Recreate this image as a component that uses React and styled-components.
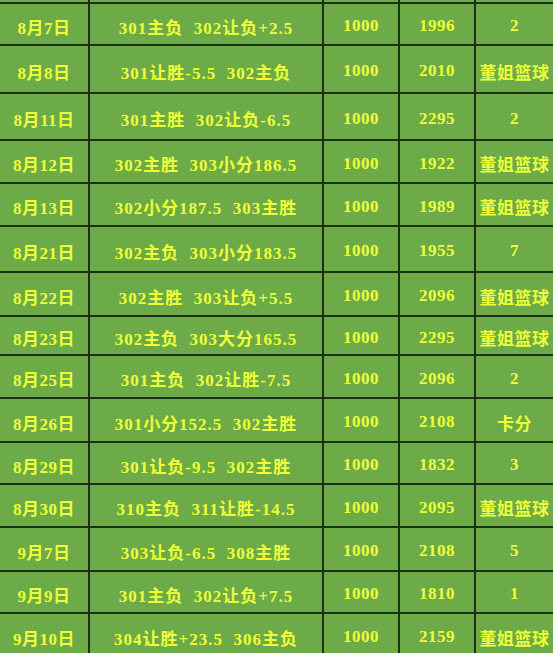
import styled, { createGlobalStyle } from 'styled-components';

const GlobalStyle = createGlobalStyle`
  html, body {
    margin: 0;
    padding: 0;
    background: #6cab48;
  }
  body {
    width: 553px;
    height: 653px;
    overflow: hidden;
  }
`;

const rows = [
  { date: '8月7日', match: '301主负  302让负+2.5', stake: '1000', total: '1996', note: '2', h: 42 },
  { date: '8月8日', match: '301让胜-5.5  302主负', stake: '1000', total: '2010', note: '董姐篮球', h: 48 },
  { date: '8月11日', match: '301主胜  302让负-6.5', stake: '1000', total: '2295', note: '2', h: 47 },
  { date: '8月12日', match: '302主胜  303小分186.5', stake: '1000', total: '1922', note: '董姐篮球', h: 43 },
  { date: '8月13日', match: '302小分187.5  303主胜', stake: '1000', total: '1989', note: '董姐篮球', h: 43 },
  { date: '8月21日', match: '302主负  303小分183.5', stake: '1000', total: '1955', note: '7', h: 46 },
  { date: '8月22日', match: '302主胜  303让负+5.5', stake: '1000', total: '2096', note: '董姐篮球', h: 44 },
  { date: '8月23日', match: '302主负  303大分165.5', stake: '1000', total: '2295', note: '董姐篮球', h: 39 },
  { date: '8月25日', match: '301主负  302让胜-7.5', stake: '1000', total: '2096', note: '2', h: 43 },
  { date: '8月26日', match: '301小分152.5  302主胜', stake: '1000', total: '2108', note: '卡分', h: 44 },
  { date: '8月29日', match: '301让负-9.5  302主胜', stake: '1000', total: '1832', note: '3', h: 42 },
  { date: '8月30日', match: '310主负  311让胜-14.5', stake: '1000', total: '2095', note: '董姐篮球', h: 43 },
  { date: '9月7日', match: '303让负-6.5  308主胜', stake: '1000', total: '2108', note: '5', h: 44 },
  { date: '9月9日', match: '301主负  302让负+7.5', stake: '1000', total: '1810', note: '1', h: 42 },
  { date: '9月10日', match: '304让胜+23.5  306主负', stake: '1000', total: '2159', note: '董姐篮球', h: 44 },
];

const Sheet = styled.div`
  display: flex;
  flex-direction: column;
  width: 553px;
  background: #6cab48;
  font-family: "Liberation Serif", "Noto Sans CJK SC", serif;
  font-weight: bold;
  font-size: 17px;
  color: #eeff3a;
`;

const Row = styled.div`
  display: grid;
  grid-template-columns: 88px 234px 76px 76px 1fr;
  height: ${(p) => p.$h}px;
  box-sizing: border-box;
  border-top: ${(p) => (p.$top ? '0' : '2px solid #1c3012')};
`;

const Cell = styled.div`
  display: flex;
  align-items: center;
  justify-content: center;
  box-sizing: border-box;
  border-left: ${(p) => (p.$first ? '0' : '2px solid #1c3012')};
  white-space: pre;
  letter-spacing: ${(p) => (p.$spaced ? '1px' : '0.5px')};
  padding-top: 4px;
`;

export default function App() {
  return (
    <>
      <GlobalStyle />
      <Sheet>
        <Row $h={2} $top>
          <Cell $first />
          <Cell />
          <Cell />
          <Cell />
          <Cell />
        </Row>
        {rows.map((r, i) => (
          <Row key={i} $h={r.h}>
            <Cell $first>{r.date}</Cell>
            <Cell $spaced>{r.match}</Cell>
            <Cell>{r.stake}</Cell>
            <Cell>{r.total}</Cell>
            <Cell>{r.note}</Cell>
          </Row>
        ))}
      </Sheet>
    </>
  );
}
